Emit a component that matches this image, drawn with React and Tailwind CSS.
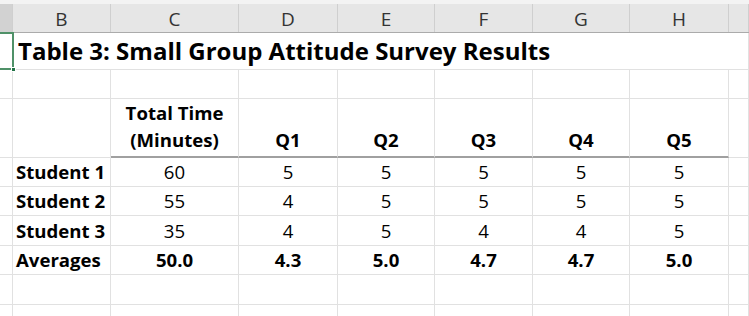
import React from "react";

const font = { fontFamily: "'Open Sans', Lato, sans-serif" };

function Cell({ children, className = "" }) {
  return (
    <div className={`border-r border-b border-[#e1e1e1] flex ${className}`}>
      {children}
    </div>
  );
}

const cols = ["", "B", "C", "D", "E", "F", "G", "H", ""];

const data = [
  ["Student 1", "60", "5", "5", "5", "5", "5"],
  ["Student 2", "55", "4", "5", "5", "5", "5"],
  ["Student 3", "35", "4", "5", "4", "4", "5"],
];
const avgs = ["Averages", "50.0", "4.3", "5.0", "4.7", "4.7", "5.0"];

export default function App() {
  const grid =
    "grid grid-cols-[13px_98px_128px_99px_97px_98px_97px_99px_1fr]";
  return (
    <div className="w-[749px] h-[316px] overflow-hidden bg-white text-black" style={font}>
      <div className="h-[4px] bg-[#f3f3f3]" />
      {/* column header */}
      <div className={`${grid} h-[29px] bg-[#e6e6e6] border-b border-[#ababab]`}>
        {cols.map((c, i) => (
          <div
            key={i}
            className={`border-r border-[#cfcfcf] flex items-end justify-center text-[19px] leading-none text-[#333] ${
              i === 0 ? "bg-[#d2d2d2]" : ""
            }`}
          >
            <span className="pb-[3px]">{c}</span>
          </div>
        ))}
      </div>
      {/* row 1: title */}
      <div className={`${grid} h-[37px] relative`}>
        <div className="relative border-b border-[#e1e1e1]">
          <div className="absolute left-[-2px] right-[-1px] top-[-1px] bottom-[-1px] z-10 border-2 border-[#4f9168]" />
          <div className="absolute right-[-3px] bottom-[-3px] z-20 w-[5px] h-[5px] bg-[#217346] border border-white" />
        </div>
        <div className="col-span-7 border-b border-[#e1e1e1] flex items-center pl-[5px] relative">
          <span className="text-[24px] font-bold leading-none whitespace-nowrap">
            Table 3: Small Group Attitude Survey Results
          </span>
        </div>
        <Cell />
      </div>
      {/* row 2: empty */}
      <div className={`${grid} h-[29px]`}>
        {cols.map((_, i) => (
          <Cell key={i} />
        ))}
      </div>
      {/* row 3: headers */}
      <div className={`${grid} h-[59px]`}>
        <Cell />
        <Cell />
        <div className="border-r border-[#e1e1e1] border-b-2 border-b-[#a0a0a0] flex items-end justify-center pb-[3px]">
          <div className="text-[18.6px] font-bold leading-[27px] text-center">
            Total Time
            <br />
            (Minutes)
          </div>
        </div>
        {["Q1", "Q2", "Q3", "Q4", "Q5"].map((q) => (
          <div
            key={q}
            className="border-r border-[#e1e1e1] border-b-2 border-b-[#a0a0a0] flex items-end justify-center pb-[3px]"
          >
            <span className="text-[18.6px] font-bold leading-[27px]">{q}</span>
          </div>
        ))}
        <Cell />
      </div>
      {data.map((row, r) => (
        <div key={r} className={`${grid} ${r === 2 ? "h-[30px]" : "h-[29px]"}`}>
          <Cell />
          <Cell className="items-end pl-[3px] pb-[4px]">
            <span className="text-[18.6px] font-bold leading-none whitespace-nowrap">{row[0]}</span>
          </Cell>
          {row.slice(1).map((v, i) => (
            <Cell key={i} className="items-end justify-center pb-[4px]">
              <span className="text-[18.6px] leading-none">{v}</span>
            </Cell>
          ))}
          <Cell />
        </div>
      ))}
      <div className={`${grid} h-[29px]`}>
        <Cell />
        <Cell className="items-end pl-[3px] pb-[4px]">
          <span className="text-[18.6px] font-bold leading-none">{avgs[0]}</span>
        </Cell>
        {avgs.slice(1).map((v, i) => (
          <Cell key={i} className="items-end justify-center pb-[4px]">
            <span className="text-[18.6px] font-bold leading-none">{v}</span>
          </Cell>
        ))}
        <Cell />
      </div>
      {[0, 1].map((k) => (
        <div key={k} className={`${grid} h-[30px]`}>
          {cols.map((_, i) => (
            <Cell key={i} />
          ))}
        </div>
      ))}
    </div>
  );
}
